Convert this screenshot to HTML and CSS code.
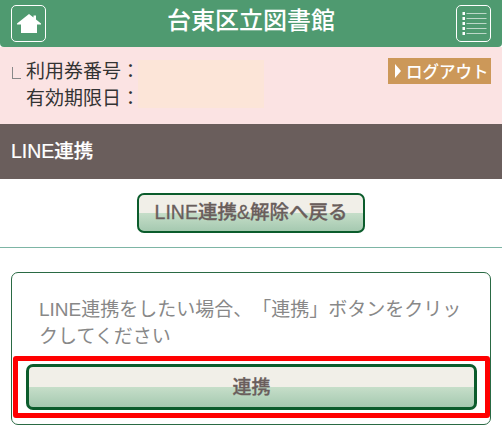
FILE: index.html
```html
<!DOCTYPE html>
<html lang="ja">
<head>
<meta charset="utf-8">
<title>台東区立図書館</title>
<link rel="stylesheet" href="styles.css">
</head>
<body>
<header class="topbar">
  <a class="icon-btn">
    <svg width="24" height="20" viewBox="0 0 24 20"><path d="M12 0 L16.500 3.500 V1.500 H19 V5.500 L24 9.500 V10.500 H20 V19 H4 V10.500 H0 V9.500 Z" fill="#fff"/></svg>
  </a>
  <h1 class="site-title">台東区立図書館</h1>
  <a class="icon-btn">
    <svg width="26" height="28" viewBox="0 0 26 28">
      <g fill="#fff"><rect x="1.500" y="2" width="2.500" height="3"/><rect x="1.500" y="7" width="2.500" height="3"/><rect x="1.500" y="12" width="2.500" height="3"/><rect x="1.500" y="17" width="2.500" height="3"/><rect x="1.500" y="22" width="2.500" height="3"/></g>
      <g fill="#bcd8c8"><rect x="5.500" y="3" width="20" height="1"/><rect x="5.500" y="8" width="20" height="1"/><rect x="5.500" y="13" width="20" height="1"/><rect x="5.500" y="18" width="20" height="1"/><rect x="5.500" y="23" width="20" height="1"/></g>
    </svg>
  </a>
</header>
<section class="userinfo">
  <div class="labels">
    <div class="label-row"><span class="corner"></span>利用券番号：</div>
    <div class="label-row">有効期限日：</div>
  </div>
  <div class="masked"></div>
  <a class="logout"><span class="arrow"></span>ログアウト</a>
</section>
<h2 class="page-title">LINE連携</h2>
<div class="back-row"><a class="btn btn-back">LINE連携&amp;解除へ戻る</a></div>
<hr class="divider">
<section class="card">
  <p class="card-text">LINE連携をしたい場合、「連携」ボタンをクリックしてください</p>
  <a class="btn btn-link">連携</a>
  <div class="highlight"></div>
</section>
</body>
</html>
```
FILE: styles.css
```css
* { box-sizing: border-box; }
html, body { margin: 0; padding: 0; }
body {
  width: 502px;
  height: 427px;
  overflow: hidden;
  background: #fff;
  font-family: "Liberation Sans", "Noto Sans CJK JP", sans-serif;
  text-spacing-trim: space-all;
}
.topbar {
  height: 47px;
  background: #4f9a70;
  border-radius: 0 0 4px 4px;
  padding: 5px 11px 0;
  display: flex;
  justify-content: space-between;
  align-items: flex-start;
}
.icon-btn {
  width: 35px;
  height: 37px;
  border: 1.500px solid #fff;
  border-radius: 5px;
  display: flex;
  align-items: center;
  justify-content: center;
}
.site-title {
  margin: 0;
  color: #fff;
  font-size: 24px;
  font-weight: 500;
  line-height: 32px;
}
.userinfo {
  height: 77px;
  background: #fbe3e3;
  padding: 11px 11px 0 26px;
  display: flex;
  align-items: flex-start;
}
.labels { width: 112px; }
.label-row {
  font-size: 19px;
  line-height: 27px;
  color: #333;
  white-space: nowrap;
  position: relative;
}
.corner {
  position: absolute;
  left: -14px;
  top: 9px;
  width: 9px;
  height: 12px;
  border-left: 1px solid #888;
  border-bottom: 1px solid #888;
}
.masked {
  width: 126px;
  height: 48px;
  margin-top: 2px;
  background: #fce5d8;
}
.logout {
  margin-left: auto;
  width: 103px;
  height: 26px;
  background: #cc9859;
  color: #fff;
  font-size: 16.500px;
  font-weight: 500;
  display: flex;
  align-items: center;
  padding-left: 7px;
  gap: 5px;
  white-space: nowrap;
}
.arrow {
  width: 0;
  height: 0;
  border-left: 6px solid #fff;
  border-top: 7px solid transparent;
  border-bottom: 7px solid transparent;
}
.page-title {
  margin: 0;
  height: 55px;
  background: #6a5e5c;
  color: #fff;
  font-size: 19.500px;
  font-weight: 500;
  line-height: 55px;
  padding-left: 11px;
  -webkit-text-stroke: 0.2px #fff;
}
.back-row {
  height: 68px;
  padding-top: 14px;
  display: flex;
  justify-content: center;
}
.btn {
  display: flex;
  align-items: center;
  justify-content: center;
  border: 2.500px solid #0b5c2c;
  border-radius: 7px;
  color: #6a5e5c;
  font-weight: 500;
  -webkit-text-stroke: 0.3px #6a5e5c;
  background: linear-gradient(#f1efe8 0, #f1efe8 50%, #c6dec9 50%, #a5c9b0 100%);
}
.btn-back {
  width: 228px;
  height: 40px;
  font-size: 19.500px;
  padding-bottom: 5px;
}
.divider {
  margin: 0;
  border: 0;
  height: 1px;
  background: #7db5a5;
}
.card {
  position: relative;
  margin: 24px 11px 0;
  height: 153px;
  border: 1px solid #2a6a44;
  border-radius: 7px;
  padding: 23px 13px 0 14px;
}
.card-text {
  margin: 0 13px;
  color: #888;
  font-size: 19px;
  line-height: 27px;
  word-break: break-all;
}
.btn-link {
  height: 46px;
  margin-top: 14px;
  font-size: 19px;
  border-width: 3px;
  padding-bottom: 3px;
}
.highlight {
  position: absolute;
  left: 1px;
  right: 0;
  top: 83px;
  height: 62px;
  border: 5px solid #f00;
  border-radius: 3px;
}
```
